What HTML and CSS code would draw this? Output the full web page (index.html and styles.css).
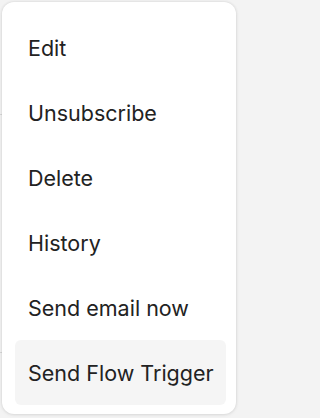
FILE: index.html
```html
<!DOCTYPE html>
<html lang="en">
<head>
<meta charset="utf-8">
<title>Menu</title>
<link rel="stylesheet" href="styles.css">
</head>
<body>
<div class="page">
  <div class="bg-line bg-line-1"></div>
  <div class="bg-line bg-line-2"></div>
  <ul class="menu">
    <li class="item">Edit</li>
    <li class="item">Unsubscribe</li>
    <li class="item">Delete</li>
    <li class="item">History</li>
    <li class="item">Send email now</li>
    <li class="item active">Send Flow Trigger</li>
  </ul>
</div>
</body>
</html>
```
FILE: styles.css
```css
html, body {
  margin: 0;
  padding: 0;
  background: #f3f3f3;
}
.page {
  position: relative;
  width: 238px;
  height: 418px;
  padding: 2px;
  box-sizing: border-box;
  font-family: Inter, "Noto Sans", sans-serif;
}
.bg-line {
  position: absolute;
  left: 0;
  width: 4px;
  height: 1px;
  background: #d9d9d9;
}
.bg-line-1 { top: 114px; }
.bg-line-2 { top: 352px; }
.menu {
  position: relative;
  list-style: none;
  margin: 0;
  padding: 13px 10px 9px 13px;
  height: 412px;
  box-sizing: border-box;
  background: #fff;
  border-radius: 12px;
  box-shadow: 0 0 3px rgba(0, 0, 0, 0.12), 0 1px 4px rgba(0, 0, 0, 0.06);
  display: flex;
  flex-direction: column;
}
.item {
  height: 65px;
  display: flex;
  align-items: center;
  padding-left: 13px;
  font-size: 21.5px;
  color: #222;
  border-radius: 6px;
}
.item.active {
  background: #f5f5f5;
}
```
